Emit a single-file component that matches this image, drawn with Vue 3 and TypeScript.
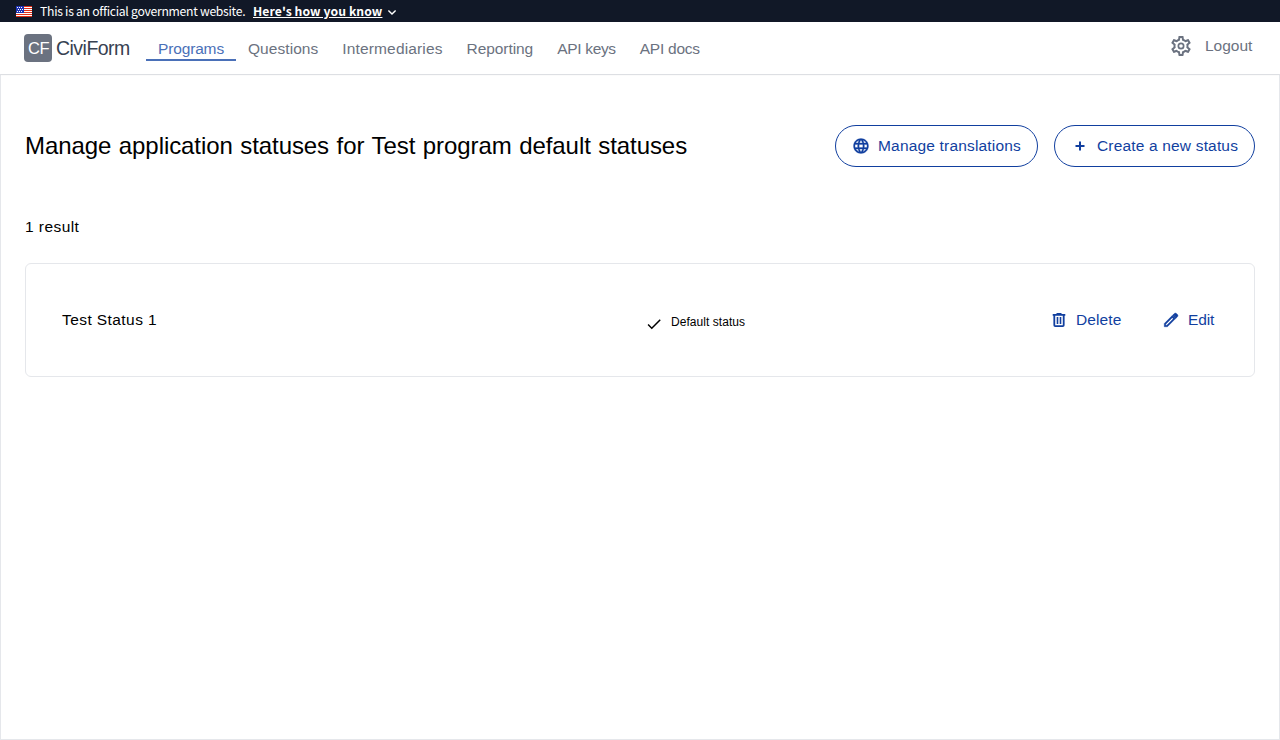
<script setup lang="ts">
interface NavItem {
  label: string
  key: string
  active?: boolean
}

const navItems: NavItem[] = [
  { label: 'Programs', key: 'programs', active: true },
  { label: 'Questions', key: 'questions' },
  { label: 'Intermediaries', key: 'intermediaries' },
  { label: 'Reporting', key: 'reporting' },
  { label: 'API keys', key: 'api-keys' },
  { label: 'API docs', key: 'api-docs' },
]
const programName = 'Test program default statuses'
const statuses = [{ name: 'Test Status 1', isDefault: true }]
</script>

<template>
  <div class="page">
    <section class="banner">
      <svg class="flag" viewBox="0 0 16 11" width="16" height="11" shape-rendering="crispEdges">
        <rect width="16" height="11" fill="#fff" />
        <path d="M0 0h16v1H0zM0 2h16v1H0zM0 4h16v1H0zM0 6h16v1H0zM0 8h16v1H0zM0 10h16v1H0z" fill="#e02e17" />
        <rect width="8" height="7" fill="#1f33b4" />
        <path d="M1 1h1v1H1zM3 1h1v1H3zM5 1h1v1H5zM2 3h1v1H2zM4 3h1v1H4zM6 3h1v1H6zM1 5h1v1H1zM3 5h1v1H3zM5 5h1v1H5z" fill="#fff" />
      </svg>
      <span class="official">This is an official government website.</span>
      <a class="know">Here's how you know</a>
      <svg class="chevron" viewBox="0 0 12 12" width="12" height="12" fill="none" stroke="currentColor" stroke-width="1.4">
        <path d="M2.4 4.4 6 8l3.6-3.6" />
      </svg>
    </section>

    <header class="topbar">
      <div class="logo">CF</div>
      <div class="brand">CiviForm</div>
      <nav class="nav">
        <a v-for="item in navItems" :key="item.key" class="nav-item" :class="[item.key, { active: item.active }]">{{ item.label }}</a>
      </nav>
      <div class="account">
        <svg viewBox="0 0 24 24" width="24" height="24" fill="currentColor">
          <path d="M19.43 12.98c.04-.32.07-.64.07-.98 0-.34-.03-.66-.07-.98l2.11-1.65c.19-.15.24-.42.12-.64l-2-3.46c-.09-.16-.26-.25-.44-.25-.06 0-.12.01-.17.03l-2.49 1c-.52-.4-1.08-.73-1.69-.98l-.38-2.65C14.46 2.18 14.25 2 14 2h-4c-.25 0-.46.18-.49.42l-.38 2.65c-.61.25-1.17.59-1.69.98l-2.49-1c-.06-.02-.12-.03-.18-.03-.17 0-.34.09-.43.25l-2 3.46c-.13.22-.07.49.12.64l2.11 1.65c-.04.32-.07.65-.07.98 0 .33.03.66.07.98l-2.11 1.65c-.19.15-.24.42-.12.64l2 3.46c.09.16.26.25.44.25.06 0 .12-.01.17-.03l2.49-1c.52.4 1.08.73 1.69.98l.38 2.65c.03.24.24.42.49.42h4c.25 0 .46-.18.49-.42l.38-2.65c.61-.25 1.17-.59 1.69-.98l2.49 1c.06.02.12.03.18.03.17 0 .34-.09.43-.25l2-3.46c.12-.22.07-.49-.12-.64l-2.11-1.65zm-1.98-1.71c.04.31.05.52.05.73 0 .21-.02.43-.05.73l-.14 1.13.89.7 1.08.84-.7 1.21-1.27-.51-1.04-.42-.9.68c-.43.32-.84.56-1.25.73l-1.06.43-.16 1.13-.2 1.35h-1.4l-.19-1.35-.16-1.13-1.06-.43c-.43-.18-.83-.41-1.23-.71l-.91-.7-1.06.43-1.27.51-.7-1.21 1.08-.84.89-.7-.14-1.13c-.03-.31-.05-.54-.05-.74s.02-.43.05-.73l.14-1.13-.89-.7-1.08-.84.7-1.21 1.27.51 1.04.42.9-.68c.43-.32.84-.56 1.25-.73l1.06-.43.16-1.13.2-1.35h1.39l.19 1.35.16 1.13 1.06.43c.43.18.83.41 1.23.71l.91.7 1.06-.43 1.27-.51.7 1.21-1.07.85-.89.7.14 1.13zM12 8.5a3.5 3.5 0 1 0 0 7 3.5 3.5 0 0 0 0-7zm0 5.3a1.8 1.8 0 1 1 0-3.6 1.8 1.8 0 0 1 0 3.6z" />
        </svg>
        <a class="logout">Logout</a>
      </div>
    </header>

    <main class="content">
      <div class="heading-row">
        <h1>Manage application statuses for {{ programName }}</h1>
        <div class="actions">
          <button class="pill translations">
            <svg viewBox="0 0 24 24" width="18" height="18" fill="currentColor" stroke="currentColor" stroke-width="0.4">
              <path d="M11.99 2C6.47 2 2 6.48 2 12s4.47 10 9.99 10C17.52 22 22 17.52 22 12S17.52 2 11.99 2zm6.93 6h-2.95c-.32-1.25-.78-2.45-1.38-3.56 1.84.63 3.37 1.91 4.33 3.56zM12 4.04c.83 1.2 1.48 2.53 1.91 3.96h-3.82c.43-1.43 1.08-2.76 1.91-3.96zM4.26 14C4.1 13.36 4 12.69 4 12s.1-1.36.26-2h3.38c-.08.66-.14 1.32-.14 2s.06 1.34.14 2H4.26zm.82 2h2.95c.32 1.25.78 2.45 1.38 3.56-1.84-.63-3.37-1.9-4.33-3.56zm2.95-8H5.08c.96-1.66 2.49-2.93 4.33-3.56C8.81 5.55 8.35 6.75 8.03 8zM12 19.96c-.83-1.2-1.48-2.53-1.91-3.96h3.82c-.43 1.43-1.08 2.76-1.91 3.96zM14.34 14H9.66c-.09-.66-.16-1.32-.16-2s.07-1.35.16-2h4.68c.09.65.16 1.32.16 2s-.07 1.34-.16 2zm.25 5.56c.6-1.11 1.06-2.31 1.38-3.56h2.95c-.96 1.65-2.49 2.93-4.33 3.56zM16.36 14c.08-.66.14-1.32.14-2s-.06-1.34-.14-2h3.38c.16.64.26 1.31.26 2s-.1 1.36-.26 2h-3.38z" />
            </svg>
            <span>Manage translations</span>
          </button>
          <button class="pill create">
            <svg viewBox="0 0 18 18" width="18" height="18" fill="none" stroke="currentColor" stroke-width="2">
              <path d="M9 4.5v9M4.5 9h9" />
            </svg>
            <span>Create a new status</span>
          </button>
        </div>
      </div>

      <p class="count">{{ statuses.length }} result</p>

      <article v-for="status in statuses" :key="status.name" class="card">
        <div class="name">{{ status.name }}</div>
        <div class="default">
          <template v-if="status.isDefault">
            <svg viewBox="0 0 24 24" width="18" height="18" fill="currentColor">
              <path d="M9 16.17 4.83 12l-1.42 1.41L9 19 21 7l-1.41-1.41z" />
            </svg>
            <span>Default status</span>
          </template>
        </div>
        <div class="card-actions">
          <button class="flat delete">
            <svg viewBox="0 0 18 18" width="18" height="18" fill="none" stroke="currentColor" stroke-width="1.8">
              <path d="M2.7 3.9h12.6M6.5 2.9h5" />
              <path d="M4.3 4v10.2q0 .9.9.9h7.6q.9 0 .9-.9V4" />
              <path d="M7.5 6v7M10.5 6v7" stroke-width="1.6" />
            </svg>
            <span>Delete</span>
          </button>
          <button class="flat edit">
            <svg viewBox="0 0 24 24" width="18" height="18" fill="currentColor" stroke="currentColor" stroke-width="0.5">
              <path d="M5 19h1.4l8.625-8.625-1.4-1.4L5 17.6V19zM17.85 10.4 7.25 21H3v-4.25l10.6-10.6 4.25 4.25z" />
              <path d="M19.3 8.925l-4.25-4.2 1.4-1.4q.575-.575 1.413-.575.837 0 1.412.575l1.4 1.4q.575.575.6 1.388.025.812-.55 1.387L19.3 8.925z" />
              <path d="M13.8 6 15.05 4.725l4.25 4.2L18 10.2z" />
            </svg>
            <span>Edit</span>
          </button>
        </div>
      </article>
    </main>
  </div>
</template>

<style>
body {
  background: #fff;
}
</style>

<style scoped>
.page {
  box-sizing: border-box;
  height: 740px;
  display: flex;
  flex-direction: column;
  overflow: hidden;
  font-family: "Liberation Sans", Arial, sans-serif;
  font-size: 15.5px;
  line-height: 24px;
  color: #000;
}
svg {
  display: block;
  flex: none;
}
.banner {
  height: 22px;
  flex: none;
  display: flex;
  align-items: center;
  padding-left: 16px;
  background: #111827;
  color: #fff;
  font-family: "Noto Sans CJK SC", "Noto Sans", sans-serif;
  font-size: 12.2px;
  line-height: 22px;
  white-space: nowrap;
}
.official {
  width: 205px;
  margin: 0 8px;
  letter-spacing: -0.28px;
}
.know {
  width: 129px;
  font-weight: 700;
  letter-spacing: 0.08px;
  text-decoration: underline;
}
.chevron {
  margin: 1px 0 0 4px;
}
.topbar {
  height: 52px;
  flex: none;
  display: flex;
  align-items: flex-start;
  padding: 0 28px 0 24px;
  box-sizing: border-box;
  background: #fff;
  box-shadow: 0 1px 2px rgba(0, 0, 0, 0.05);
  position: relative;
  color: #6b7280;
  white-space: nowrap;
}
.logo {
  box-sizing: border-box;
  width: 28px;
  height: 28px;
  margin-top: 12px;
  padding-left: 1px;
  border-radius: 4px;
  background: #6b7280;
  color: #fff;
  font-size: 16.5px;
  letter-spacing: -0.5px;
  line-height: 28px;
  text-align: center;
}
.brand {
  width: 90px;
  margin: 12px 0 0 4px;
  font-size: 19.5px;
  line-height: 28px;
  letter-spacing: -0.53px;
  color: #374151;
}
.nav {
  display: flex;
  margin-top: 15px;
}
.nav-item {
  padding: 0 12px;
  height: 22px;
  border-bottom: 2px solid transparent;
}
.active {
  color: #4a70b8;
  border-color: #4a70b8;
}
.programs { width: 66px; letter-spacing: -0.15px; }
.questions { width: 70.3px; letter-spacing: 0.06px; }
.intermediaries { width: 100.3px; letter-spacing: 0.15px; }
.reporting { width: 66.6px; letter-spacing: -0.07px; }
.api-keys { width: 58.6px; letter-spacing: -0.32px; }
.api-docs { width: 60px; letter-spacing: -0.25px; }
.account {
  margin: 12px 0 0 auto;
  display: flex;
  gap: 12px;
}
.logout {
  width: 47px;
}
.content {
  flex: 1;
  box-sizing: border-box;
  border: 1px solid #e5e7eb;
  padding: 50px 24px 0;
}
.heading-row {
  display: flex;
  align-items: center;
  justify-content: space-between;
  height: 42px;
}
h1 {
  margin: 0;
  font-size: 24px;
  font-weight: 400;
  line-height: 32px;
  letter-spacing: -0.08px;
  word-spacing: 1px;
  white-space: nowrap;
}
.actions {
  display: flex;
  gap: 16px;
}
button {
  display: flex;
  align-items: center;
  box-sizing: border-box;
  margin: 0;
  background: transparent;
  border: 0;
  font: inherit;
  color: #113f9f;
  gap: 8px;
  white-space: nowrap;
}
.pill {
  height: 42px;
  padding: 0 16px;
  border: 1px solid #113f9f;
  border-radius: 21px;
}
.translations {
  width: 203px;
  letter-spacing: 0.18px;
}
.create {
  width: 201px;
  letter-spacing: 0.17px;
}
.count {
  margin: 48px 0 24px;
  letter-spacing: 0.44px;
}
.card {
  box-sizing: border-box;
  height: 114px;
  display: flex;
  align-items: center;
  padding: 0 24px 0 36px;
  border: 1px solid #e5e7eb;
  border-radius: 6px;
}
.name {
  width: 583px;
  letter-spacing: 0.42px;
}
.default {
  display: flex;
  align-items: center;
  gap: 8px;
  font-size: 12px;
  line-height: 16px;
  letter-spacing: 0.05px;
  padding-top: 4px;
}
.default svg {
  margin: 3px 0 -1px;
}
.card-actions {
  display: flex;
  gap: 8px;
  margin-left: auto;
}
.flat {
  height: 40px;
  padding: 0 16px;
}
.delete {
  width: 104px;
  letter-spacing: 0.1px;
}
.edit {
  width: 84px;
  letter-spacing: -0.1px;
}
</style>
